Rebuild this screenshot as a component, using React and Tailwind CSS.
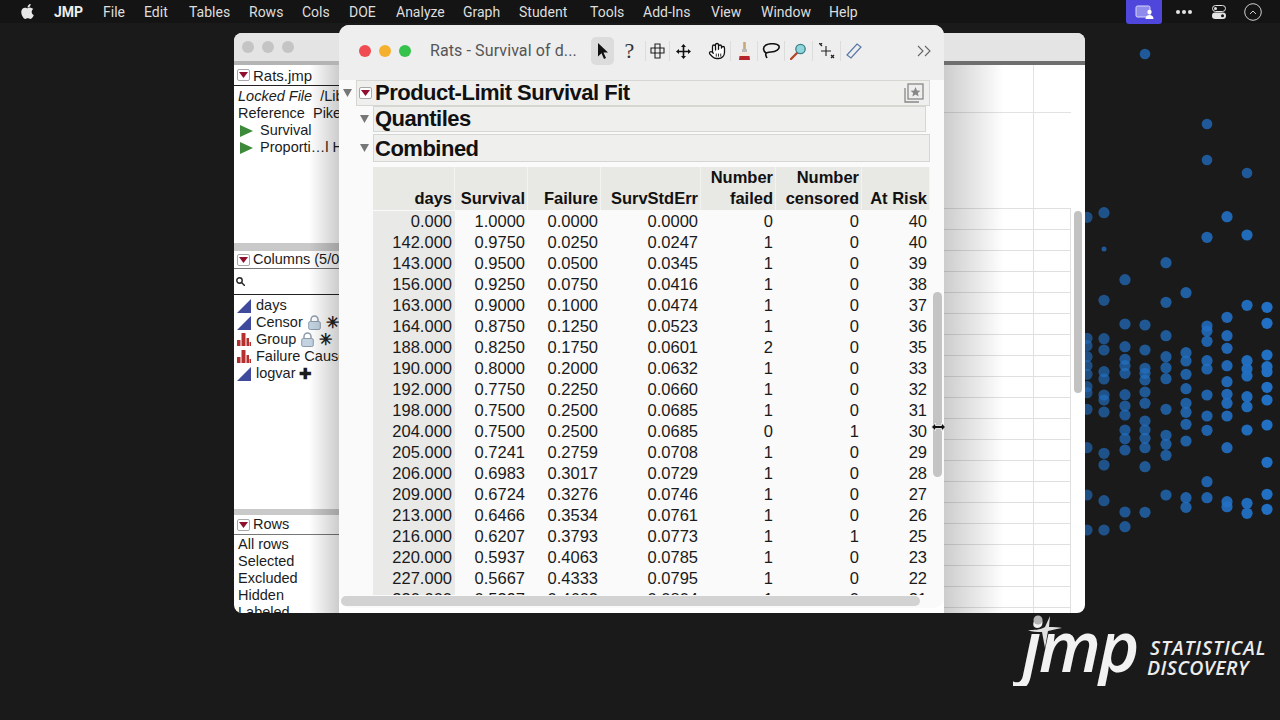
import React from "react";
import { FaApple } from "react-icons/fa";

const sans = "font-['Liberation_Sans',Arial,sans-serif]";

const menu = [["File", 103], ["Edit", 144], ["Tables", 189], ["Rows", 249], ["Cols", 302], ["DOE", 349], ["Analyze", 396], ["Graph", 463], ["Student", 519], ["Tools", 590], ["Add-Ins", 643], ["View", 711], ["Window", 761], ["Help", 829]];

const dotCols = [
  [1087, 0.62, [52, 415, 437, 470, 497, 523, 560, 578, 628, 743, 885, 990]],
  [1104, 0.66, [38, 301, 416, 450, 515, 537, 585, 600, 636, 760, 795, 902, 990]],
  [1125, 0.7, [239, 372, 440, 478, 497, 520, 584, 618, 645, 690, 716, 750, 936, 980]],
  [1145, 0.72, [375, 450, 505, 520, 540, 576, 610, 663, 690, 715, 743, 800, 937]],
  [1166, 0.75, [188, 307, 407, 470, 503, 536, 628, 706, 733, 766, 885]],
  [1186, 0.8, [278, 458, 483, 523, 566, 610, 637, 673, 723, 893, 922]],
  [1207, 0.85, [112, 378, 393, 424, 482, 507, 585, 648, 691, 845, 893]],
  [1227, 0.9, [50, 352, 407, 445, 497, 545, 583, 610, 648, 743, 905, 920]],
  [1247, 0.95, [105, 316, 482, 507, 528, 590, 620, 690, 910, 940]],
  [1267, 1, [322, 370, 465, 500, 515, 562, 600, 675, 787, 883, 928]],
];
const extraDots = [[1145, 54, 5.3], [1207, 124, 5.3], [1207, 160, 5.3], [1247, 173, 5.3], [1104, 249, 2.5]];

const rows = [
  ["0.000", "1.0000", "0.0000", "0.0000", "0", "0", "40"],
  ["142.000", "0.9750", "0.0250", "0.0247", "1", "0", "40"],
  ["143.000", "0.9500", "0.0500", "0.0345", "1", "0", "39"],
  ["156.000", "0.9250", "0.0750", "0.0416", "1", "0", "38"],
  ["163.000", "0.9000", "0.1000", "0.0474", "1", "0", "37"],
  ["164.000", "0.8750", "0.1250", "0.0523", "1", "0", "36"],
  ["188.000", "0.8250", "0.1750", "0.0601", "2", "0", "35"],
  ["190.000", "0.8000", "0.2000", "0.0632", "1", "0", "33"],
  ["192.000", "0.7750", "0.2250", "0.0660", "1", "0", "32"],
  ["198.000", "0.7500", "0.2500", "0.0685", "1", "0", "31"],
  ["204.000", "0.7500", "0.2500", "0.0685", "0", "1", "30"],
  ["205.000", "0.7241", "0.2759", "0.0708", "1", "0", "29"],
  ["206.000", "0.6983", "0.3017", "0.0729", "1", "0", "28"],
  ["209.000", "0.6724", "0.3276", "0.0746", "1", "0", "27"],
  ["213.000", "0.6466", "0.3534", "0.0761", "1", "0", "26"],
  ["216.000", "0.6207", "0.3793", "0.0773", "1", "1", "25"],
  ["220.000", "0.5937", "0.4063", "0.0785", "1", "0", "23"],
  ["227.000", "0.5667", "0.4333", "0.0795", "1", "0", "22"],
  ["230.000", "0.5397", "0.4603", "0.0804", "1", "0", "21"],
];

const Red = () => (
  <span className="inline-flex w-[13px] h-[12px] shrink-0 items-center justify-center bg-white border border-[#a8a8a8] rounded-[2px]">
    <svg width="9" height="6" viewBox="0 0 9 6"><polygon points="0,0 9,0 4.5,6" fill="#8f0f2e" /></svg>
  </span>
);
const Disclose = () => (
  <svg width="9" height="8" viewBox="0 0 9 8" className="shrink-0"><polygon points="0,0 9,0 4.5,8" fill="#777" /></svg>
);
const Play = () => (
  <svg width="13" height="12" viewBox="0 0 13 12" className="shrink-0"><polygon points="0,0 13,6 0,12" fill="#3d8a3a" /></svg>
);
const Cont = () => (
  <svg width="14" height="14" viewBox="0 0 14 14" className="shrink-0"><polygon points="0,14 14,0 14,14" fill="#3f4a9c" /></svg>
);
const Nom = () => (
  <svg width="14" height="13" viewBox="0 0 14 13" className="shrink-0"><path d="M0 7h3.5v6H0zM4.5 0h4v13h-4zM9.500 5H12v8H9.500zM12.500 9H14v4h-1.500z" fill="#b3302e" /></svg>
);
const Lock = () => (
  <svg width="13" height="15" viewBox="0 0 13 15" className="shrink-0"><path d="M3 7V4.500a3.500 3.500 0 0 1 7 0V7" fill="none" stroke="#8d9cad" strokeWidth="1.500" /><rect x="0.700" y="6.500" width="11.600" height="8" rx="1.500" fill="#c3d3e2" stroke="#8d9cad" /></svg>
);

const Col = ({ icon, children }) => (
  <div className="h-[17px] flex items-center gap-[5px] pl-[3px] whitespace-nowrap">{icon}{children}</div>
);

function Sep() {
  return <span className="w-px h-[20px] bg-[#dcdcdc] shrink-0" />;
}
const Tool = ({ w = 26, children, cls = "" }) => (
  <span className={"flex items-center justify-center h-[28px] shrink-0 " + cls} style={{ width: w }}>{children}</span>
);

function Toolbar() {
  return (
    <div className="flex items-center h-[28px]">
      <Tool w={23} cls="bg-[#dcdcdc] rounded-[5px]">
        <svg width="12" height="16" viewBox="0 0 12 16"><path d="M1 0l10 9.500H6.500l2.500 5.500-2 1-2.500-5.700L1 13.500z" fill="#111" /></svg>
      </Tool>
      <Tool w={31}><span className="font-['Liberation_Serif',serif] text-[22px] leading-[22px] text-[#333]">?</span></Tool>
      <Sep />
      <Tool w={23}>
        <svg width="15" height="16" viewBox="0 0 15 16" fill="none" stroke="#222" strokeWidth="1.100"><path d="M5 1h5v4h4v5h-4v5H5v-5H1V5h4z" /><path d="M5 5h5v5H5z" /></svg>
      </Tool>
      <Sep />
      <Tool w={26}>
        <svg width="15" height="15" viewBox="0 0 15 15" fill="#111"><path d="M7.500 0l2.500 3H8.300v3.700H12V5l3 2.500L12 10V8.300H8.300V12H10l-2.500 3L5 12h1.700V8.300H3V10L0 7.500 3 5v1.700h3.700V3H5z" /></svg>
      </Tool>
      <Tool w={8} />
      <Tool w={26}>
        <svg width="18" height="18" viewBox="0 0 24 24" fill="#fff" stroke="#111" strokeWidth="1.700" strokeLinecap="round" strokeLinejoin="round"><path d="M18 11V6a2 2 0 0 0-4 0M14 10V4a2 2 0 0 0-4 0v2M10 10.500V6a2 2 0 0 0-4 0v8" /><path d="M18 8a2 2 0 1 1 4 0v6a8 8 0 0 1-8 8h-2c-2.800 0-4.500-.900-6-2.400L2.400 16a2 2 0 0 1 2.800-2.800L7 15" /><path d="M11 16v3M14 16v3M17 16v3" strokeWidth="1.200" /></svg>
      </Tool>
      <Sep />
      <Tool w={26}>
        <svg width="13" height="18" viewBox="0 0 13 18"><rect x="5.200" y="0" width="2.600" height="7" fill="#c9a777" /><rect x="4" y="7" width="5" height="3" fill="#bbb" /><path d="M2 10h9l1 8H1z" fill="#f4e8de" /><path d="M1.500 14h10l.500 4H1z" fill="#b5222a" /></svg>
      </Tool>
      <Sep />
      <Tool w={26}>
        <svg width="18" height="16" viewBox="0 0 18 16" fill="none" stroke="#111" strokeWidth="1.600"><path d="M4 10C1 8 .500 4 4 2c4-2 11-1.500 13 1 1 3-3 6-8 6-2 0-3.500 .500-5 1z" /><path d="M4 10c-1 2 0 3 1 5" /></svg>
      </Tool>
      <Sep />
      <Tool w={27}>
        <svg width="17" height="17" viewBox="0 0 17 17"><path d="M1 16l6-6" stroke="#b5482a" strokeWidth="2.400" strokeLinecap="round" /><circle cx="10.500" cy="6" r="4.700" fill="#8fd5dc" stroke="#3a7f88" strokeWidth="1.300" /></svg>
      </Tool>
      <Sep />
      <Tool w={27}>
        <svg width="16" height="16" viewBox="0 0 16 16" stroke="#222" fill="none"><path d="M7 3v10M2 8h10" strokeWidth="1.100" /><path d="M0 0l3 3M3 0L1.500 1.500M12 12l3 3M15 12l-3 3" strokeWidth="1.300" /></svg>
      </Tool>
      <Sep />
      <Tool w={26}>
        <svg width="16" height="16" viewBox="0 0 16 16" fill="none" stroke="#5878a8" strokeWidth="1.200"><path d="M11 1l4 3L5 15l-4-3z" /></svg>
      </Tool>
    </div>
  );
}

const Head = ({ a, b }) => (
  <div className="bg-[#e8e8e4] border-r border-[#f3f3f1] h-[43px] flex flex-col justify-end items-end pr-[2px] pb-[1px] leading-[21px] text-[16.500px] font-bold text-[#111] whitespace-nowrap">
    {a && <span>{a}</span>}
    <span>{b}</span>
  </div>
);

export default function App() {
  return (
    <div className={"relative w-[1280px] h-[720px] bg-[#1a1a1a] overflow-hidden " + sans}>
      <svg width="1280" height="720" className="absolute inset-0">
        {dotCols.flatMap(([x, o, ys]) => ys.map((y) => (
          <circle key={x + "-" + y} cx={x} cy={200 + y / 3} r="5.600" fill="#2270c4" opacity={o} />
        )))}
        {extraDots.map(([x, y, r]) => <circle key={x + "e" + y} cx={x} cy={y} r={r} fill="#2060a8" opacity="0.9" />)}
      </svg>

      <header className="relative h-[23px] bg-[#141414] text-[#dedede] text-[14px] font-['Roboto',sans-serif]">
        <FaApple className="absolute left-[19px] top-[3px] text-[#e8e8e8]" size={17} />
        <span className="absolute left-[54px] top-[2px] font-bold text-[#eee]">JMP</span>
        {menu.map(([m, x]) => (
          <span key={m} className="absolute top-[2px]" style={{ left: x }}>{m}</span>
        ))}
        <span className="absolute left-[1126px] top-0 w-[36px] h-[24px] bg-[#4f46dc] rounded-b-[3px] flex items-center justify-center">
          <svg width="19" height="14" viewBox="0 0 19 14"><rect x="1" y="1" width="14" height="11" rx="1.500" fill="#8f8bec" stroke="#d8d6fa" strokeWidth="1" /><circle cx="14.500" cy="7" r="2.200" fill="#fff" /><path d="M10.500 14c0-3 2-4 4-4s4 1 4 4z" fill="#fff" /></svg>
        </span>
        <span className="absolute left-[1176px] top-[10px] flex gap-[2px]">
          <i className="w-[4px] h-[4px] rounded-full bg-[#e4e4e4]" /><i className="w-[4px] h-[4px] rounded-full bg-[#e4e4e4]" /><i className="w-[4px] h-[4px] rounded-full bg-[#e4e4e4]" />
        </span>
        <svg className="absolute left-[1212px] top-[5px]" width="14" height="14" viewBox="0 0 14 14"><rect x="0.500" y="0.500" width="13" height="6" rx="3" fill="none" stroke="#e4e4e4" /><circle cx="3.500" cy="3.500" r="1.500" fill="#e4e4e4" /><rect y="7.500" width="14" height="6.500" rx="3.200" fill="#e4e4e4" /><circle cx="10.500" cy="10.700" r="1.500" fill="#141414" /></svg>
        <svg className="absolute left-[1244px] top-[3px]" width="18" height="18" viewBox="0 0 18 18" fill="none" stroke="#cfcfcf" strokeWidth="1"><circle cx="9" cy="9" r="8.300" /><path d="M6 11l3-3 3 3" /></svg>
      </header>

      {/* back window */}
      <section className="absolute left-[234px] top-[33px] w-[851px] h-[580px] rounded-[8px] overflow-hidden bg-white flex flex-col">
        <div className="h-[28px] bg-[#e4e4e4] flex items-center gap-[8px] pl-[8px] shrink-0">
          <i className="w-[12px] h-[12px] rounded-full bg-[#c4c4c4]" />
          <i className="w-[12px] h-[12px] rounded-full bg-[#c4c4c4]" />
          <i className="w-[12px] h-[12px] rounded-full bg-[#c4c4c4]" />
        </div>
        <div className="h-[4px] flex shrink-0">
          <div className="w-[105px] bg-[#b4b4b4]" />
          <div className="flex-1 bg-[#6f6f6f]" />
        </div>
        <div className="flex flex-1 min-h-0">
          <aside className="w-[105px] shrink-0 text-[14.500px] leading-[17px] text-[#1c1c1c] overflow-hidden flex flex-col">
            <div className="h-[21px] flex items-center gap-[3px] pl-[3px] border-b border-[#222] text-[15px] whitespace-nowrap shrink-0"><Red />Rats.jmp</div>
            <div className="h-[157px] pt-[2px] shrink-0">
              <div className="h-[17px] pl-[4px] whitespace-nowrap"><em>Locked File</em>&nbsp; /Library</div>
              <div className="h-[17px] pl-[4px] whitespace-nowrap">Reference&nbsp; Pike</div>
              <div className="h-[17px] flex items-center gap-[7px] pl-[6px] whitespace-nowrap"><Play />Survival</div>
              <div className="h-[17px] flex items-center gap-[7px] pl-[6px] whitespace-nowrap"><Play />Proporti…l H</div>
            </div>
            <div className="h-[8px] bg-[#c9c9c9] shrink-0" />
            <div className="h-[18px] flex items-center gap-[3px] pl-[3px] border-b border-[#777] whitespace-nowrap shrink-0"><Red />Columns (5/0)</div>
            <div className="h-[26px] pl-[2px] flex items-center border-b border-[#222] shrink-0">
              <svg width="9" height="9" viewBox="0 0 9 9" fill="none" stroke="#222" strokeWidth="1.400"><circle cx="3.500" cy="3.500" r="2.700" /><path d="M5.500 5.500L9 9" /></svg>
            </div>
            <div className="h-[214px] pt-[2px] shrink-0">
              <Col icon={<Cont />}>days</Col>
              <Col icon={<Cont />}>Censor<Lock /><span className="text-[16px] text-[#222] font-bold">✳</span></Col>
              <Col icon={<Nom />}>Group<Lock /><span className="text-[16px] text-[#222] font-bold">✳</span></Col>
              <Col icon={<Nom />}>Failure Cause</Col>
              <Col icon={<Cont />}>logvar<span className="text-[15px] font-bold -ml-[2px]">✚</span></Col>
            </div>
            <div className="h-[6px] bg-[#c9c9c9] shrink-0" />
            <div className="h-[20px] flex items-center gap-[3px] pl-[3px] border-b border-[#777] whitespace-nowrap shrink-0"><Red />Rows</div>
            <div className="pl-[4px] pt-[1px] whitespace-nowrap">
              <div>All rows</div><div>Selected</div><div>Excluded</div><div>Hidden</div><div>Labeled</div>
            </div>
          </aside>
          <div className="flex-1 min-w-0 flex pl-[605px] relative">
            <div className="w-[127px] shrink-0 flex flex-col">
              <div className="h-[48px] border-b border-[#e2e2e2] shrink-0 flex">
                <div className="w-[90px] border-r border-[#e2e2e2]" />
              </div>
              <div className="h-[95px] shrink-0 flex"><div className="w-[90px] border-r border-[#e2e2e2]" /></div>
              {Array.from({ length: 20 }).map((_, i) => (
                <div key={i} className="h-[21px] shrink-0 border-t border-r border-[#e0e0e0] flex"><div className="w-[90px] border-r border-[#e0e0e0]" /></div>
              ))}
            </div>
            <div className="flex-1 pt-[146px] flex justify-end pr-[3px]">
              <div className="w-[8px] h-[182px] rounded-full bg-[#c2c2c2]" />
            </div>
            {/* shadow the front window casts to its right */}
            <div className="absolute left-[605px] top-0 bottom-0 w-[60px] bg-linear-to-r from-[rgba(0,0,0,0.2)] to-[rgba(0,0,0,0)]" />
          </div>
          {/* shadow the front window casts to its left */}
          <div className="absolute left-[75px] top-[32px] bottom-0 w-[30px] bg-linear-to-l from-[rgba(0,0,0,0.2)] to-[rgba(0,0,0,0)]" />
        </div>
      </section>

      {/* front window */}
      <section className="absolute left-[339px] top-[25px] w-[605px] h-[583px] rounded-[10px] overflow-hidden bg-[#fafafa] flex flex-col">
        <div className="h-[55px] bg-[#eeeeee] shrink-0 flex items-center pl-[20px] pr-[13px] pb-[3px]">
          <i className="w-[12px] h-[12px] rounded-full bg-[#ef4b50]" />
          <i className="w-[12px] h-[12px] rounded-full bg-[#f5b02e] ml-[8px]" />
          <i className="w-[12px] h-[12px] rounded-full bg-[#34c24a] ml-[8px]" />
          <span className="ml-[19px] w-[161px] text-[16px] tracking-[0.1px] text-[#555] font-['Roboto',sans-serif] whitespace-nowrap">Rats - Survival of d...</span>
          <Toolbar />
          <svg className="ml-auto" width="14" height="12" viewBox="0 0 14 12" fill="none" stroke="#666" strokeWidth="1.100"><path d="M1 1l5 5-5 5M8 1l5 5-5 5" /></svg>
        </div>
        <div className="flex-1 min-h-0 relative flex flex-col">
          <div className="h-[515px] overflow-hidden shrink-0 text-[#111]">
            <div className="h-[26px] flex items-center">
              <span className="w-[17px] pl-[4px] flex"><Disclose /></span>
              <div className="w-[574px] h-[26px] bg-[#efefed] border border-[#d6d6d2] flex items-center pl-[2px] pb-[1px] gap-[3px] relative">
                <Red />
                <span className="text-[22px] tracking-[-0.500px] font-bold text-[#111] whitespace-nowrap">Product-Limit Survival Fit</span>
                <svg className="ml-auto mr-[4px]" width="22" height="22" viewBox="0 0 22 22" fill="none" stroke="#888" strokeWidth="1.300"><path d="M2 6v14h14" /><rect x="5" y="2" width="15" height="15" fill="#eee" /><polygon points="12.500,5 14,8.500 17.500,8.700 14.800,11 15.700,14.500 12.500,12.600 9.300,14.500 10.200,11 7.500,8.700 11,8.500" fill="#888" stroke="none" /></svg>
              </div>
            </div>
            <div className="h-[26px] flex items-center pl-[21px]">
              <span className="w-[13px] flex"><Disclose /></span>
              <div className="w-[553px] h-[26px] bg-[#efefed] border border-[#d6d6d2] flex items-center pl-[1px] pb-[1px]">
                <span className="text-[22px] tracking-[-0.500px] font-bold whitespace-nowrap">Quantiles</span>
              </div>
            </div>
            <div className="h-[32px] flex items-center pl-[21px]">
              <span className="w-[13px] flex"><Disclose /></span>
              <div className="w-[557px] h-[28px] bg-[#efefed] border border-[#d6d6d2] flex items-center pl-[1px]">
                <span className="text-[22px] tracking-[-0.500px] font-bold whitespace-nowrap">Combined</span>
              </div>
            </div>
            <div className="ml-[34px] mt-[3px] w-[557px] grid grid-cols-[82px_73px_73px_100px_75px_86px_68px]">
              <Head b="days" /><Head b="Survival" /><Head b="Failure" /><Head b="SurvStdErr" /><Head a="Number" b="failed" /><Head a="Number" b="censored" /><Head b="At Risk" />
              <div className="col-span-7 h-px" />
              {rows.map((r) => r.map((c, j) => (
                <div key={r[0] + j} className={"h-[21px] leading-[21px] text-right pr-[3px] text-[16.500px] text-[#1a1a1a] " + (j === 0 ? "bg-[#e9e9e7]" : "")}>{c}</div>
              )))}
            </div>
          </div>
          {/* scrollbars */}
          <div className="absolute left-[594px] top-[212px] w-[9px] h-[185px] rounded-full bg-[#c4c4c4]" />
          <div className="ml-[2px] mt-[1px] w-[579px] h-[10px] rounded-full bg-[#d2d2d2]" />
        </div>
      </section>

      {/* resize cursor */}
      <svg className="absolute left-[931px] top-[422px]" width="15" height="10" viewBox="0 0 15 10"><path d="M0.500 5L4.500 1v2.500h6V1l4 4-4 4V6.500h-6V9z" fill="#111" stroke="#fff" strokeWidth="0.800" /></svg>

      {/* logo */}
      <div className="absolute left-[1012px] top-[612px] w-[260px] h-[74px] overflow-hidden">
        <span className="absolute left-[10px] top-[-7px] font-['Open_Sans',sans-serif] italic font-semibold text-[70px] leading-[80px] tracking-[-2.500px] text-[#f2f2f2]">jmp</span>
        <svg className="absolute left-0 top-0" width="50" height="40" viewBox="0 0 50 40">
          <circle cx="26" cy="8" r="4.500" fill="#b5b5b5" />
          <path d="M16 18c6 0 12 0 17-3l5-11-1 11c5 0 10 0 13 1-6 1-9 2-14 3l-3 17-3-16c-5 0-10 0-14-2z" fill="#e0e0e0" />
        </svg>
        <span className="absolute left-[138px] top-[26px] font-['Open_Sans',sans-serif] italic font-semibold text-[19.500px] tracking-[0.900px] leading-[20px] text-[#ececec] whitespace-nowrap">STATISTICAL</span>
        <span className="absolute left-[135px] top-[46px] font-['Open_Sans',sans-serif] italic font-semibold text-[19.500px] tracking-[0.400px] leading-[20px] text-[#ececec] whitespace-nowrap">DISCOVERY</span>
      </div>
    </div>
  );
}
